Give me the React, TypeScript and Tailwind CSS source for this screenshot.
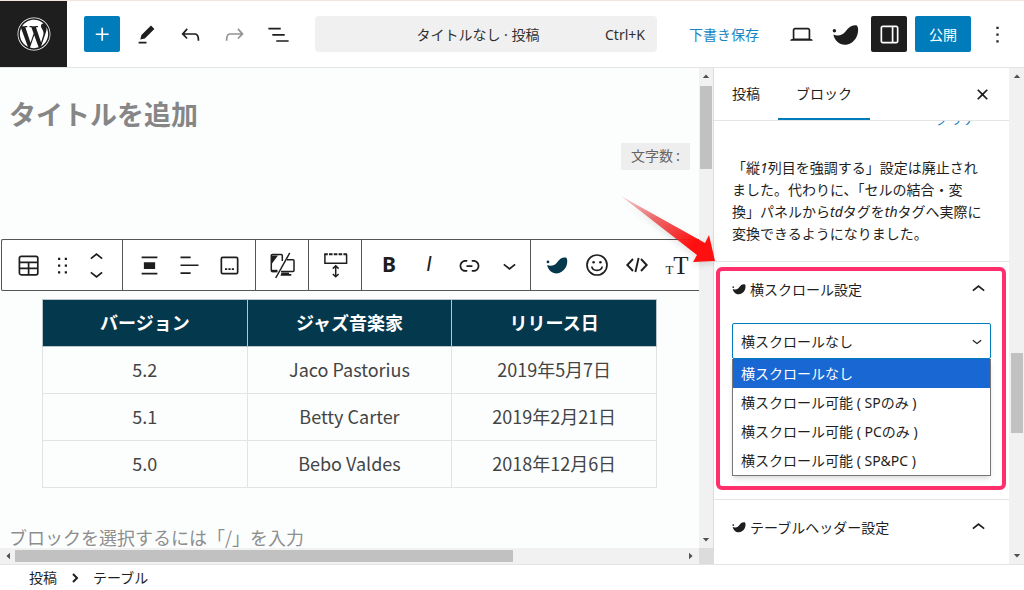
import type { ReactNode } from "react";
import clsx from "clsx";
import { FaWordpress } from "react-icons/fa";

const ICONS = {
  plus: "M11 12.5V17.5H12.5V12.5H17.5V11H12.5V6H11V11H6V12.5H11Z",
  edit: "m19 7-3-3-8.5 8.5-1 4 4-1L19 7Zm-7 11.5H5V20h7v-1.5Z",
  undo: "M18.3 11.7c-.6-.6-1.4-.9-2.3-.9H6.7l2.9-3.3-1.1-1-4.5 5L8.5 16l1-1-2.7-2.7H16c.5 0 .9.2 1.3.5 1 1 1 3.4 1 4.5v.3h1.5v-.2c0-1.5 0-4.3-1.5-5.7z",
  redo: "M15.6 6.5l-1.1 1 2.9 3.3H8c-.9 0-1.7.3-2.3.9-1.4 1.5-1.4 4.2-1.4 5.6v.2h1.5v-.3c0-1.1 0-3.5 1-4.5.3-.3.7-.5 1.3-.5h9.2L14.5 15l1.1 1.1 4.6-4.6-4.6-5z",
  listView: "M3 6h11v1.5H3V6Zm3.5 5.5h11V13h-11v-1.5ZM21 17H10v1.5h11V17Z",
  desktop: "M20.5 16h-.7V8c0-1.1-.9-2-2-2H6.2c-1.1 0-2 .9-2 2v8h-.7c-.8 0-1.5.7-1.5 1.5h20c0-.8-.7-1.5-1.5-1.5zM5.7 8c0-.3.2-.5.5-.5h11.6c.3 0 .5.2.5.5v7.6H5.7V8z",
  drawer: "M18 4H6c-1.1 0-2 .9-2 2v12c0 1.1.9 2 2 2h12c1.1 0 2-.9 2-2V6c0-1.1-.9-2-2-2zm-4 14.5H6c-.3 0-.5-.2-.5-.5V6c0-.3.2-.5.5-.5h8v13zm4.5-.5c0 .3-.2.5-.5.5h-2.5v-13H18c.3 0 .5.2.5.5v12z",
  more: "M13 19h-2v-2h2v2zm0-6h-2v-2h2v2zm0-6h-2V5h2v2z",
  close: "M12 13.06l3.712 3.713 1.061-1.06L13.061 12l3.712-3.712-1.06-1.06L12 10.938 8.288 7.227l-1.061 1.06L10.939 12l-3.712 3.712 1.06 1.061L12 13.061z",
  drag: "M8 7h2V5H8v2zm0 6h2v-2H8v2zm0 6h2v-2H8v2zm6-14v2h2V5h-2zm0 8h2v-2h-2v2zm0 6h2v-2h-2v2z",
  up: "M6.5 12.4L12 8l5.5 4.4-.9 1.2L12 10l-4.5 3.6-1-1.2z",
  down: "M17.5 11.6L12 16l-5.5-4.4.9-1.2L12 14l4.5-3.6 1 1.2z",
  alignNone: "M19 5.5H5V4h14v1.5ZM19 20H5v-1.5h14V20ZM7 9h10v6H7V9Z",
  alignLeft: "M13 5.5H4V4h9v1.5Zm7 7H4V11h16v1.5Zm-7 7H4V18h9v1.5Z",
  caption: "M6 5.5h12a.5.5 0 0 1 .5.5v12a.5.5 0 0 1-.5.5H6a.5.5 0 0 1-.5-.5V6a.5.5 0 0 1 .5-.5ZM4 6a2 2 0 0 1 2-2h12a2 2 0 0 1 2 2v12a2 2 0 0 1-2 2H6a2 2 0 0 1-2-2V6Zm4 10h2v-1.5H8V16Zm5 0h-2v-1.5h2V16Zm1 0h2v-1.5h-2V16Z",
  link: "M15.6 7.2H14v1.5h1.6c2 0 3.7 1.7 3.7 3.7s-1.7 3.7-3.7 3.7H14v1.5h1.6c2.8 0 5.2-2.3 5.2-5.2 0-2.9-2.3-5.2-5.2-5.2zM4.7 12.4c0-2 1.7-3.7 3.7-3.7H10V7.2H8.4c-2.9 0-5.2 2.3-5.2 5.2 0 2.9 2.3 5.2 5.2 5.2H10v-1.5H8.4c-2 0-3.7-1.7-3.7-3.7zm4.6.9h5.3v-1.5H9.3v1.5z",
};

const Icon = ({ name, className = "size-[27px]" }: { name: keyof typeof ICONS; className?: string }) => (
  <svg viewBox="0 0 24 24" fill="currentColor" fillRule="evenodd" className={clsx("shrink-0", className)} aria-hidden="true">
    <path d={ICONS[name]} />
  </svg>
);

const SwellIcon = ({ className }: { className: string }) => (
  <svg viewBox="0 0 27 27" fill="currentColor" className={clsx("shrink-0", className)} aria-hidden="true">
    <circle cx="2.4" cy="9.8" r="1.7" />
    <path d="M1.4 13.6C5.5 15.4 10.5 14.5 13.5 10.5C16.5 6 20 3.6 24.4 4.3C27 5.5 26.5 13 24 17C21.3 21.3 17.5 23.8 13 23.8C7 23.8 2.4 19.5 1.4 13.6Z" />
  </svg>
);

const TableIcon = () => (
  <svg viewBox="0 0 27 27" fill="none" stroke="currentColor" strokeWidth="1.7" className="size-[27px]" aria-hidden="true">
    <rect x="4.4" y="4.4" width="18.4" height="18.4" rx="1.8" />
    <path d="M4.4 10.3H22.8M4.4 16.4H22.8M13.6 10.3V22.8" />
  </svg>
);

const DeviceIcon = () => (
  <svg viewBox="0 0 27 27" fill="none" stroke="currentColor" strokeWidth="1.5" className="size-[27px]" aria-hidden="true">
    <path d="M13.3 9V3.5a1 1 0 0 0-1-1H3.3a1 1 0 0 0-1 1V18.6a1 1 0 0 0 1 1H8" />
    <path d="M18 7.8H24a1 1 0 0 1 1 1V18.4a1 1 0 0 1-1 1H12" />
    <path d="M3 3.5H9L3 11.5Z" fill="currentColor" stroke="none" />
    <path d="M12.5 20.5H20V22H22.3V23.8H11.5L12.5 20.5Z" fill="currentColor" stroke="none" />
    <path d="M2.5 19H8.5" strokeWidth="2.4" />
    <path d="M20.7 1L6.7 26" />
  </svg>
);

const RowSpaceIcon = () => (
  <svg viewBox="0 0 27 27" fill="none" stroke="currentColor" strokeWidth="1.5" className="size-[27px]" aria-hidden="true">
    <path d="M2.9 2.3V11.2H24.6V2.3" />
    <path d="M2.2 2.3H25.2" strokeWidth="2" strokeDasharray="3.6 1.2" />
    <path d="M13.7 14V24.5M10.8 16.6L13.7 13.8L16.6 16.6M10.8 22L13.7 24.8L16.6 22" />
  </svg>
);

const SmileIcon = () => (
  <svg viewBox="0 0 24 24" fill="none" stroke="currentColor" strokeWidth="1.7" className="size-6" aria-hidden="true">
    <circle cx="12" cy="12" r="10" />
    <path d="M6.8 13.5C7.5 18.6 16.5 18.6 17.2 13.5" />
    <circle cx="8.6" cy="9.2" r="1.3" fill="currentColor" stroke="none" />
    <circle cx="15.4" cy="9.2" r="1.3" fill="currentColor" stroke="none" />
  </svg>
);

const CodeIcon = () => (
  <svg viewBox="0 0 24 24" fill="none" stroke="currentColor" strokeWidth="1.9" className="size-6" aria-hidden="true">
    <path d="M8 6L2.3 12L8 18M16 6L21.7 12L16 18M13.6 5L10.4 19" />
  </svg>
);

const HeaderButton = ({ label, className, children }: { label: string; className?: string; children: ReactNode }) => (
  <button type="button" aria-label={label} className={clsx("flex size-9 shrink-0 items-center justify-center rounded-xs", className)}>
    {children}
  </button>
);

const TopBar = () => (
  <header className="flex h-[68px] shrink-0 items-center border-t border-b border-t-[#f3e4dc] border-b-[#e4e4e4] bg-white">
    <a href="#posts" aria-label="WordPress" className="flex w-[67px] shrink-0 items-center justify-center self-stretch bg-[#1e1e1e] text-white">
      <FaWordpress className="size-[34px]" />
    </a>
    <div className="flex gap-2 pl-[17px]">
      <HeaderButton label="ブロックを追加" className="bg-[#007cba] text-white">
        <Icon name="plus" />
      </HeaderButton>
      <HeaderButton label="ツール"><Icon name="edit" /></HeaderButton>
      <HeaderButton label="元に戻す"><Icon name="undo" /></HeaderButton>
      <HeaderButton label="やり直す" className="text-[#949494]"><Icon name="redo" /></HeaderButton>
      <HeaderButton label="リスト表示"><Icon name="listView" /></HeaderButton>
    </div>
    <button type="button" className="mr-4 ml-[19px] flex h-9 flex-1 items-center rounded bg-[#f0f0f0] pr-3 pl-9 text-[#2f2f2f]">
      <span className="flex-1 text-center">タイトルなし · 投稿</span>
      <span>Ctrl+K</span>
    </button>
    <div className="flex items-center gap-2 pr-[9px]">
      <button type="button" className="h-9 px-4 text-[#1a85bf]">下書き保存</button>
      <HeaderButton label="表示"><Icon name="desktop" /></HeaderButton>
      <HeaderButton label="SWELL設定"><SwellIcon className="size-[27px]" /></HeaderButton>
      <HeaderButton label="設定" className="bg-[#1e1e1e] text-white"><Icon name="drawer" /></HeaderButton>
      <button type="button" className="h-9 rounded-xs bg-[#007cba] px-3.5 text-white">公開</button>
      <HeaderButton label="オプション"><Icon name="more" /></HeaderButton>
    </div>
  </header>
);

const ToolButton = ({ label, children }: { label: string; children: ReactNode }) => (
  <button type="button" aria-label={label} className="flex w-10 shrink-0 items-center justify-center">
    {children}
  </button>
);

const ToolGroup = ({ className = "border-r px-[6px]", children }: { className?: string; children: ReactNode }) => (
  <div className={clsx("flex shrink-0 border-[#555]", className)}>{children}</div>
);

const BlockToolbar = () => (
  <div role="toolbar" className="ml-px flex h-[52px] overflow-hidden rounded-l-xs border border-r-0 border-[#555] bg-white">
    <ToolGroup>
      <ToolButton label="テーブル"><TableIcon /></ToolButton>
      <button type="button" aria-label="ドラッグ" className="flex w-7 items-center justify-center"><Icon name="drag" /></button>
      <div className="flex w-10 flex-col items-center justify-center">
        <button type="button" aria-label="上に移動" className="flex h-4 items-center"><Icon name="up" /></button>
        <button type="button" aria-label="下に移動" className="flex h-4 items-center"><Icon name="down" /></button>
      </div>
    </ToolGroup>
    <ToolGroup>
      <ToolButton label="配置"><Icon name="alignNone" /></ToolButton>
      <ToolButton label="カラム"><Icon name="alignLeft" /></ToolButton>
      <ToolButton label="キャプション"><Icon name="caption" /></ToolButton>
    </ToolGroup>
    <ToolGroup>
      <ToolButton label="デバイス制限"><DeviceIcon /></ToolButton>
    </ToolGroup>
    <ToolGroup>
      <ToolButton label="余白"><RowSpaceIcon /></ToolButton>
    </ToolGroup>
    <ToolGroup className="border-r pr-px pl-[7px]">
      <ToolButton label="太字"><span className="text-[21px] font-bold">B</span></ToolButton>
      <ToolButton label="イタリック"><span className="font-[Roboto,sans-serif] text-[21px] italic">I</span></ToolButton>
      <ToolButton label="リンク"><Icon name="link" /></ToolButton>
      <ToolButton label="さらに表示"><Icon name="down" /></ToolButton>
    </ToolGroup>
    <ToolGroup className="pl-[6px]">
      <ToolButton label="SWELL装飾"><SwellIcon className="size-[22px] text-[#04384c]" /></ToolButton>
      <ToolButton label="絵文字"><SmileIcon /></ToolButton>
      <ToolButton label="コード"><CodeIcon /></ToolButton>
      <ToolButton label="フォントサイズ">
        <span className="flex items-baseline font-['Liberation_Serif',serif] leading-none">
          <span className="text-[13px]">T</span>
          <span className="text-[25px]">T</span>
        </span>
      </ToolButton>
    </ToolGroup>
  </div>
);

const HEADINGS = ["バージョン", "ジャズ音楽家", "リリース日"];
const ROWS = [
  ["5.2", "Jaco Pastorius", "2019年5月7日"],
  ["5.1", "Betty Carter", "2019年2月21日"],
  ["5.0", "Bebo Valdes", "2018年12月6日"],
];

const Editor = () => (
  <div className="flex min-h-0 min-w-0 flex-1 flex-col overflow-hidden bg-[#fcfefe] pt-[26px] font-['Noto_Sans_CJK_JP',sans-serif]">
    <h1 className="shrink-0 pl-[9px] text-[27px] leading-10 font-bold text-[#868686]">タイトルを追加</h1>
    <div className="mt-[9px] mr-[9px] flex h-[27px] shrink-0 items-center self-end bg-[#eee] px-[10px] pb-[2px] text-[14px] text-[#666]">文字数 :</div>
    <div className="mt-[69px] shrink-0 font-['Noto_Sans','Noto_Sans_CJK_JP',sans-serif]">
      <BlockToolbar />
    </div>
    <div className="mx-[42px] mt-2 shrink-0">
      <table className="w-full table-fixed border-collapse text-center text-[18px] leading-7 text-[#444]">
        <thead>
          <tr className="bg-[#04384c] text-white">
            {HEADINGS.map((h) => (
              <th key={h} className="h-[47px] border border-[#b9c5ca] p-0 pb-[2px]">{h}</th>
            ))}
          </tr>
        </thead>
        <tbody>
          {ROWS.map((row) => (
            <tr key={row[0]}>
              {row.map((cell) => (
                <td key={cell} className="h-[47px] border border-[#e2e4e4] p-0 pb-[2px]">{cell}</td>
              ))}
            </tr>
          ))}
        </tbody>
      </table>
    </div>
    <p className="mt-[39px] shrink-0 pl-[9px] text-[18px] leading-5 whitespace-nowrap text-[#8e8e8e]">ブロックを選択するには「/」を入力</p>
  </div>
);

const Arrow = ({ d }: { d: string }) => (
  <svg viewBox="0 0 8 8" className="size-2 shrink-0 fill-[#505050]" aria-hidden="true">
    <path d={d} />
  </svg>
);

const VerticalScrollbar = ({ className, thumb }: { className: string; thumb: string }) => (
  <div className={clsx("flex shrink-0 flex-col items-center bg-[#f1f1f1] py-1", className)}>
    <Arrow d="M0.8 6L4 2.4L7.2 6Z" />
    <div className={clsx("w-3 bg-[#c1c1c1]", thumb)} />
    <div className="flex-1" />
    <Arrow d="M0.8 2L4 5.6L7.2 2Z" />
  </div>
);

const PanelHeading = ({ children }: { children: string }) => (
  <button type="button" className="flex h-[54px] w-full items-center gap-1 pr-[17px] pl-[18px]">
    <SwellIcon className="size-[14px]" />
    <span className="flex-1 text-left">{children}</span>
    <Icon name="up" />
  </button>
);

const OPTIONS = ["横スクロールなし", "横スクロール可能 ( SPのみ )", "横スクロール可能 ( PCのみ )", "横スクロール可能 ( SP&PC )"];

const ScrollSettings = () => (
  <section className="relative border-t border-[#e4e4e4] pb-[23px]">
    <PanelHeading>横スクロール設定</PanelHeading>
    <div className="px-[18px] pt-[7px]">
      <div className="relative flex items-center">
        <select aria-label="横スクロール設定" className="h-9 w-full appearance-none rounded-xs border border-[#007cba] bg-white px-2">
          {OPTIONS.map((o) => (
            <option key={o}>{o}</option>
          ))}
        </select>
        <Icon name="down" className="pointer-events-none absolute right-1 size-5" />
      </div>
      <ul role="listbox" aria-label="横スクロール設定" className="border border-t-0 border-[#777] bg-white shadow-md">
        {OPTIONS.map((o, i) => (
          <li
            key={o}
            role="option"
            aria-selected={i === 0}
            className={clsx("h-[29px] px-2 leading-[29px]", i === 0 && "bg-[#1967d2] text-white")}
          >
            {o}
          </li>
        ))}
      </ul>
    </div>
    <div className="pointer-events-none absolute top-[5px] right-[3px] bottom-[9px] left-[2px] rounded-md border-4 border-[#ff2f6c]" />
  </section>
);

const Sidebar = () => (
  <aside className="flex w-[296px] shrink-0 flex-col border-l border-[#dcdcdc] bg-white">
    <div className="flex h-[53px] shrink-0 items-stretch border-b border-[#e4e4e4]">
      <button type="button" className="px-[18px] pb-[2px]">投稿</button>
      <button type="button" className="border-b-2 border-[#007cba] px-[18px]">ブロック</button>
      <button type="button" aria-label="設定を閉じる" className="mr-[13px] ml-auto flex items-center">
        <Icon name="close" />
      </button>
    </div>
    <div className="min-h-0 flex-1 overflow-hidden">
      <div className="-mt-3 flex justify-end pr-8">
        <a href="#clear" className="leading-5 text-[#1a85bf]">クリア</a>
      </div>
      <p className="px-[18px] pt-7 pb-4 leading-[22px] whitespace-nowrap">
        「縦<i>1</i>列目を強調する」設定は廃止され
        <br />
        ました。代わりに、「セルの結合・変
        <br />
        換」パネルから<i>td</i>タグを<i>th</i>タグへ実際に
        <br />
        変換できるようになりました。
      </p>
      <ScrollSettings />
      <section className="border-t border-[#e4e4e4]">
        <PanelHeading>テーブルヘッダー設定</PanelHeading>
      </section>
    </div>
  </aside>
);

const PointerArrow = () => (
  <svg viewBox="0 0 100 70" className="pointer-events-none absolute top-[128px] right-[303px] h-[70px] w-[100px] drop-shadow-md" aria-hidden="true">
    <defs>
      <linearGradient id="pointer" x1="0" y1="0" x2="1" y2="0.7">
        <stop offset="0" stopColor="#e05050" stopOpacity="0.25" />
        <stop offset="0.4" stopColor="#e84545" stopOpacity="0.8" />
        <stop offset="0.85" stopColor="#ff1010" />
      </linearGradient>
    </defs>
    <path d="M0 0L84 47L88 39L94 65L72 66L76 59Z" fill="url(#pointer)" />
  </svg>
);

const App = () => (
  <div className="flex h-screen flex-col overflow-hidden bg-white font-['Noto_Sans','Noto_Sans_CJK_JP',sans-serif] text-[14px] text-[#1e1e1e]">
    <TopBar />
    <main className="relative flex min-h-0 flex-1">
      <div className="flex min-w-0 flex-1 flex-col">
        <div className="flex min-h-0 flex-1">
          <Editor />
          <VerticalScrollbar className="w-[14px]" thumb="mt-[6px] h-[83px]" />
        </div>
        <div className="flex h-4 shrink-0 bg-[#f1f1f1]">
          <div className="flex flex-1 items-center px-1">
            <Arrow d="M6 0.8L2.4 4L6 7.2Z" />
            <div className="ml-[3px] h-3 w-[72%] bg-[#c1c1c1]" />
            <div className="flex-1" />
            <Arrow d="M2 0.8L5.6 4L2 7.2Z" />
          </div>
          <div className="w-[14px] bg-[#dcdcdc]" />
        </div>
      </div>
      <Sidebar />
      <VerticalScrollbar className="w-[15px]" thumb="mt-[273px] h-[80px]" />
      <PointerArrow />
    </main>
    <footer className="flex h-[26px] shrink-0 items-center border-t border-[#e4e4e4] bg-white pl-[29px]">
      <nav className="flex items-center gap-3.5">
        <a href="#post">投稿</a>
        <svg viewBox="0 0 8 10" fill="none" stroke="currentColor" strokeWidth="2" className="h-[10px] w-2" aria-hidden="true">
          <path d="M2 1L6 5L2 9" />
        </svg>
        <a href="#table">テーブル</a>
      </nav>
    </footer>
  </div>
);

export default App;
